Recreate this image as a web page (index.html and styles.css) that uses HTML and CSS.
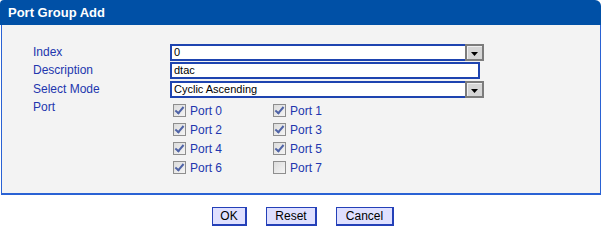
FILE: index.html
```html
<!DOCTYPE html>
<html>
<head>
<meta charset="utf-8">
<link rel="stylesheet" href="styles.css">
</head>
<body>
<div class="panel">
  <div class="panel-head">Port Group Add</div>
  <div class="panel-body">
    <div class="form">
      <div class="label">Index</div>
      <div class="field"><div class="select"><span class="sel-text">0</span><span class="sel-btn"><svg width="7" height="4" viewBox="0 0 7 4"><path d="M0 0H7L3.5 4Z" fill="#000"/></svg></span></div></div>
      <div class="label">Description</div>
      <div class="field"><div class="input">dtac</div></div>
      <div class="label">Select Mode</div>
      <div class="field"><div class="select"><span class="sel-text">Cyclic Ascending</span><span class="sel-btn"><svg width="7" height="4" viewBox="0 0 7 4"><path d="M0 0H7L3.5 4Z" fill="#000"/></svg></span></div></div>
      <div class="label label-port">Port</div>
      <div class="field field-ports">
        <div class="ports">
          <label class="port"><span class="cb checked"></span>Port 0</label>
          <label class="port"><span class="cb checked"></span>Port 1</label>
          <label class="port"><span class="cb checked"></span>Port 2</label>
          <label class="port"><span class="cb checked"></span>Port 3</label>
          <label class="port"><span class="cb checked"></span>Port 4</label>
          <label class="port"><span class="cb checked"></span>Port 5</label>
          <label class="port"><span class="cb checked"></span>Port 6</label>
          <label class="port"><span class="cb"></span>Port 7</label>
        </div>
      </div>
    </div>
  </div>
</div>
<div class="actions">
  <button class="btn btn-ok">OK</button>
  <button class="btn btn-reset">Reset</button>
  <button class="btn btn-cancel">Cancel</button>
</div>
</body>
</html>
```
FILE: styles.css
```css
html, body {
  margin: 0;
  padding: 0;
  background: #ffffff;
  font-family: "Liberation Sans", Arial, sans-serif;
  font-size: 12px;
}
.panel {
  width: 601px;
}
.panel-head {
  background: #0050a6;
  color: #ffffff;
  font-weight: bold;
  font-size: 13px;
  height: 25px;
  line-height: 25px;
  padding-left: 8px;
  border-radius: 4px 6px 0 0;
}
.panel-body {
  box-sizing: border-box;
  width: 600px;
  background: #f3f3f3;
  border: 1px solid #2a62d4;
  border-top: none;
  border-bottom-width: 2px;
  margin-left: 1px;
  height: 170px;
}
.form {
  display: grid;
  grid-template-columns: 137px 320px;
  grid-template-rows: 18px 19px 19px auto;
  padding-left: 31px;
  padding-top: 19px;
}
.label {
  color: #2236ae;
  line-height: 17px;
}
.label-port {
  line-height: 14px;
}
.select {
  box-sizing: border-box;
  width: 314px;
  height: 17px;
  border: 2px solid #1e44b0;
  background: #fff;
  display: flex;
  align-items: stretch;
}
.sel-text {
  flex: 1;
  color: #000;
  font-size: 11px;
  line-height: 13px;
  padding-left: 2px;
}
.sel-btn {
  box-sizing: border-box;
  width: 19px;
  margin: -2px -2px -2px 0;
  background: #d6d6d6;
  border: 2px solid #7c7c7c;
  box-shadow: inset 1px 1px 0 #f0f0f0;
  display: flex;
  align-items: center;
  justify-content: center;
  padding-top: 2px;
}
.input {
  box-sizing: border-box;
  width: 310px;
  height: 17px;
  border: 2px solid #1e44b0;
  background: #fff;
  color: #000;
  font-size: 11px;
  line-height: 13px;
  padding-left: 2px;
}
.ports {
  display: grid;
  grid-template-columns: 100px 100px;
  grid-auto-rows: 19px;
  padding-left: 3px;
  margin-top: 1px;
}
.port {
  display: flex;
  align-items: center;
  color: #2236ae;
  height: 19px;
}
.cb {
  box-sizing: border-box;
  width: 13px;
  height: 13px;
  border: 1px solid #8e8e8e;
  background: linear-gradient(135deg, #dcdcdc, #f4f4f4);
  margin-right: 4px;
  position: relative;
}
.cb.checked::after {
  content: "";
  position: absolute;
  left: 3px;
  top: 0px;
  width: 3px;
  height: 7px;
  border: solid #4f63a6;
  border-width: 0 2px 2px 0;
  transform: rotate(40deg);
}
.actions {
  display: flex;
  justify-content: center;
  gap: 19px;
  padding-top: 12px;
  padding-left: 3px;
}
.btn {
  box-sizing: border-box;
  height: 19px;
  background: #dfe0ff;
  border: 1px solid #2440b8;
  border-right-width: 2px;
  border-bottom-width: 2px;
  font-family: "Liberation Sans", Arial, sans-serif;
  font-size: 12px;
  color: #000;
  padding: 0 4px;
  line-height: 14px;
}
.btn-ok { width: 35px; }
.btn-reset { width: 51px; }
.btn-cancel { width: 58px; }
```
